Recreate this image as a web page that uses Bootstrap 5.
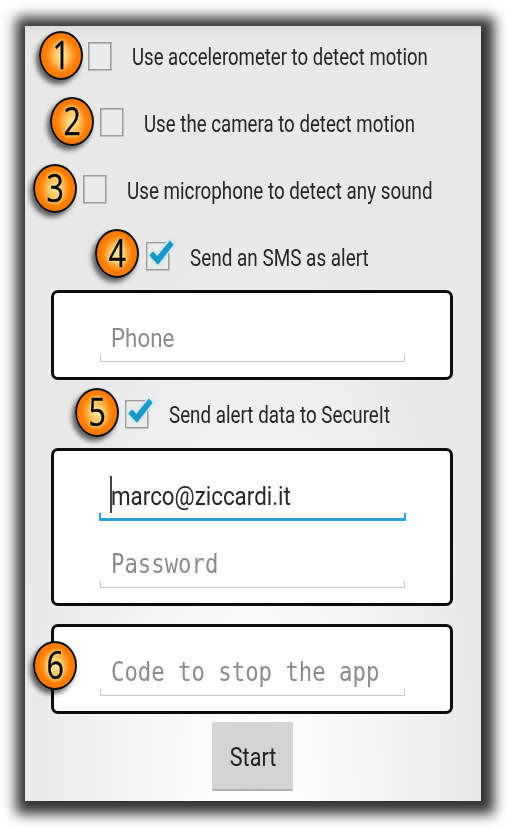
<!DOCTYPE html>
<html lang="en">
<head>
<meta charset="utf-8">
<meta name="viewport" content="width=device-width, initial-scale=1">
<title>SecureIt</title>
<link href="https://cdn.jsdelivr.net/npm/bootstrap@5.3.0/dist/css/bootstrap.min.css" rel="stylesheet">
<style>
body{font-family:Roboto,"Liberation Sans",sans-serif;background:#fff;color:#262626;padding:26px 0 0 25px;height:830px;overflow:hidden}
.screen{width:456px;height:775px;
 background:radial-gradient(ellipse 240px 600px at 50% 100%,#fff 0,#fbfbfb 25%,#f1f1f1 60%,#e8e8e8 100%);
 box-shadow:2px 2px 12px 11px #333,inset 0 10px 10px -8px #d6d6d6}
.option{height:67px;font-size:23px;line-height:30px}
.o1{height:63px;padding:0 0 3px 14px}.o2{padding-left:25px}.o3{padding-left:8px}.o4{padding-left:70px}.o5{height:68px;padding-left:50px}
.num{width:44px;height:49px;margin-top:-3px;border-radius:50%;border:2px solid #111;color:#0a0a0a;text-align:center;
 background:radial-gradient(ellipse closest-side,#ffe79a 0,#ffc765 32%,#ff9323 62%,#ff7b00 82%);
 box-shadow:-3px 4px 5px rgba(0,0,0,.6);font:39px/42px "Open Sans","Noto Sans",sans-serif}
.o1 .num{margin-top:-2px}.o4 .num{margin-top:-6px}
.num span{display:inline-block;transform:scaleX(.78);-webkit-text-stroke:.4px #0a0a0a;text-shadow:0 0 4px #ffe9a0,0 0 5px #ffdf88}
.tick{width:24px;height:29px;margin:0 20px 0 5px;overflow:visible}
.o2 .tick,.o3 .tick,.o5 .tick{margin-left:6px}.o4 .tick{margin-left:7px}
.fit{display:inline-block;white-space:pre;transform-origin:0 50%;transform:scaleX(.812)}
.option .fit{padding-top:4px}
.o1 .fit{transform:scaleX(.808)}.o3 .fit,.o5 .fit{transform:scaleX(.817)}.o4 .fit{transform:scaleX(.822)}
.panel{width:402px;margin-left:26px;border:3px solid #0c0c0c;border-radius:7px;background:#fff;padding:28px 0 15px 45px}
.code-panel{margin-top:18px}
.field{width:307px;font-size:26px;line-height:34px}
.field+.field{margin-top:26px}
.field .fit{display:block;width:0;margin-left:12px;transform:scaleX(.86)}
.rule{height:7px;border:1.5px solid #c6c6c6;border-top:0;margin:0 1px}
.active-rule{height:8px;margin:0;border:2px solid #27a3d9;border-bottom-width:3px;border-top:0}
.caret{left:11px;top:-3px;width:1.5px;height:37px;background:#444}
.mono{font-family:"DejaVu Sans Mono",monospace}
.mono .fit{transform:scaleX(.857)}
.hint{color:#8c8c8c}
.code-num{left:-21px;top:17px}
.start{width:81px;height:69px;margin:8px 0 0 187px;padding:3px 0 0 1px;background:#d4d4d4;border:0;border-bottom:2px solid #b0b0b0;border-radius:2px;font-size:26px;color:#222}
.start .fit{transform-origin:50% 50%;transform:scaleX(.83)}
</style>
</head>
<body>
<svg class="d-none">
 <symbol id="box" viewBox="0 0 24 29"><rect x=".8" y=".8" width="22" height="27" fill="#ebebeb" stroke="#999" stroke-width="1.5"/></symbol>
</svg>
<main class="screen">
 <div class="option o1 d-flex align-items-center"><div class="num flex-shrink-0"><span>1</span></div><svg class="tick flex-shrink-0"><use href="#box"/></svg><span class="fit">Use accelerometer to detect motion</span></div>
 <div class="option o2 d-flex align-items-center"><div class="num flex-shrink-0"><span>2</span></div><svg class="tick flex-shrink-0"><use href="#box"/></svg><span class="fit">Use the camera to detect motion</span></div>
 <div class="option o3 d-flex align-items-center"><div class="num flex-shrink-0"><span>3</span></div><svg class="tick flex-shrink-0"><use href="#box"/></svg><span class="fit">Use microphone to detect any sound</span></div>
 <div class="option o4 d-flex align-items-center"><div class="num flex-shrink-0"><span>4</span></div>
  <svg class="tick flex-shrink-0" viewBox="0 0 24 29"><defs><filter id="glow" x="-50%" y="-50%" width="200%" height="200%"><feGaussianBlur stdDeviation="2"/></filter>
   <g id="check"><path d="M20 .8H.8v27h22V11" fill="none" stroke="#999" stroke-width="1.5"/><path d="M1.6 1.6H22V27H1.6z" fill="#ebebeb"/><path d="M3 13l4-4 4 5L24-2l4.500 4.500L12 24z" fill="#9be0f8" opacity=".8" filter="url(#glow)"/><path d="M3.300 13.500L7 9.500l4.300 4.500L24-1.400l3.500 4.200L12 22.800z" fill="#1997c8"/></g></defs><use href="#check"/></svg>
  <span class="fit">Send an SMS as alert</span></div>
 <section class="panel">
  <div class="field hint"><span class="fit">Phone</span><div class="rule"></div></div>
 </section>
 <div class="option o5 d-flex align-items-center"><div class="num flex-shrink-0"><span>5</span></div><svg class="tick flex-shrink-0" viewBox="0 0 24 29"><use href="#check"/></svg><span class="fit">Send alert data to SecureIt</span></div>
 <section class="panel">
  <div class="field position-relative"><span class="fit">marco@ziccardi.it</span><div class="active-rule"></div><i class="caret position-absolute"></i></div>
  <div class="field hint mono"><span class="fit">Password</span><div class="rule"></div></div>
 </section>
 <section class="panel code-panel position-relative">
  <div class="num code-num position-absolute"><span>6</span></div>
  <div class="field hint mono"><span class="fit">Code to stop the app</span><div class="rule"></div></div>
 </section>
 <button class="start btn d-block" type="button"><span class="fit">Start</span></button>
</main>
<script src="https://cdn.jsdelivr.net/npm/bootstrap@5.3.0/dist/js/bootstrap.bundle.min.js"></script>
</body>
</html>
